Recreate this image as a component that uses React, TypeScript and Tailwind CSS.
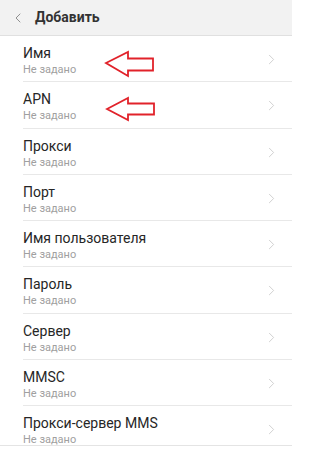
import { ChevronLeft, ChevronRight } from 'lucide-react';

const items = [
  'Имя',
  'APN',
  'Прокси',
  'Порт',
  'Имя пользователя',
  'Пароль',
  'Сервер',
  'MMSC',
  'Прокси-сервер MMS',
];

export default function App() {
  return (
    <div className="relative w-[292px] h-[450px] overflow-hidden bg-white font-['Roboto',sans-serif]">
      <header className="flex items-center h-[36px] bg-[#f2f2f2] border-b border-[#e0e0e0]">
        <ChevronLeft className="ml-[10px] text-[#808080]" size={16} strokeWidth={1.3} />
        <h1 className="ml-[9px] text-[14px] font-bold text-[#333]">Добавить</h1>
      </header>

      <ul className="h-[409px] overflow-hidden">
        {items.map((title) => (
          <li key={title} className="pl-[23px] h-[46.3px]">
            <div className="flex items-start justify-between h-full border-b border-[#e8e8e8] pt-[9px] pr-[12px]">
              <div className="flex flex-col gap-[2px]">
                <span className="text-[14px] leading-[16px] text-[#262626]">{title}</span>
                <span className="text-[11px] leading-[13px] text-[#a0a0a0]">Не задано</span>
              </div>
              <ChevronRight className="mt-[6px] text-[#c4c4c4]" size={17} strokeWidth={1.1} />
            </div>
          </li>
        ))}
      </ul>

      <div className="h-[5px] border-t border-[#e4e4e4] bg-white" />

      {/* red marker arrows drawn over the list */}
      <svg
        className="absolute left-0 top-0 pointer-events-none"
        width="292"
        height="450"
        viewBox="0 0 292 450"
      >
        <polygon
          points="106,63 128,52 128,58.5 153,58.5 153,70.5 128,70.5 128,76"
          fill="none"
          stroke="#e1222a"
          strokeWidth="1.8"
          strokeLinejoin="miter"
        />
        <polygon
          points="107,109 128,98 128,103.5 154,103.5 154,114.5 128,114.5 128,120"
          fill="none"
          stroke="#e1222a"
          strokeWidth="1.8"
          strokeLinejoin="miter"
        />
      </svg>
    </div>
  );
}
